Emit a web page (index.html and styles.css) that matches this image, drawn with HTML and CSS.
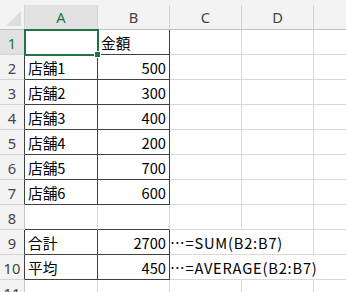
FILE: index.html
```html
<!DOCTYPE html>
<html lang="ja">
<head>
<meta charset="utf-8">
<link rel="stylesheet" href="styles.css">
</head>
<body>
<div class="sheet">
  <div class="topstrip"></div>
  <div class="corner"><span class="tri"></span></div>
  <div class="colh sel">A</div>
  <div class="colh">B</div>
  <div class="colh">C</div>
  <div class="colh">D</div>
  <div class="colh last"></div>

  <div class="rowh sel">1</div>
  <div class="cell a1 bt br"></div>
  <div class="cell bt br">金額</div>
  <div class="cell"></div>
  <div class="cell"></div>
  <div class="cell last"></div>

  <div class="rowh bd">2</div>
  <div class="cell bt br">店舗1</div>
  <div class="cell num bt br">500</div>
  <div class="cell"></div>
  <div class="cell"></div>
  <div class="cell last"></div>

  <div class="rowh bd">3</div>
  <div class="cell bt br">店舗2</div>
  <div class="cell num bt br">300</div>
  <div class="cell"></div>
  <div class="cell"></div>
  <div class="cell last"></div>

  <div class="rowh bd">4</div>
  <div class="cell bt br">店舗3</div>
  <div class="cell num bt br">400</div>
  <div class="cell"></div>
  <div class="cell"></div>
  <div class="cell last"></div>

  <div class="rowh bd">5</div>
  <div class="cell bt br">店舗4</div>
  <div class="cell num bt br">200</div>
  <div class="cell"></div>
  <div class="cell"></div>
  <div class="cell last"></div>

  <div class="rowh bd">6</div>
  <div class="cell bt br">店舗5</div>
  <div class="cell num bt br">700</div>
  <div class="cell"></div>
  <div class="cell"></div>
  <div class="cell last"></div>

  <div class="rowh bd">7</div>
  <div class="cell bt br">店舗6</div>
  <div class="cell num bt br">600</div>
  <div class="cell"></div>
  <div class="cell"></div>
  <div class="cell last"></div>

  <div class="rowh">8</div>
  <div class="cell bt"></div>
  <div class="cell bt"></div>
  <div class="cell"></div>
  <div class="cell"></div>
  <div class="cell last"></div>

  <div class="rowh bd">9</div>
  <div class="cell bt br">合計</div>
  <div class="cell num bt br">2700</div>
  <div class="cell over nr">…=SUM(B2:B7)</div>
  <div class="cell"></div>
  <div class="cell last"></div>

  <div class="rowh bd">10</div>
  <div class="cell bt br">平均</div>
  <div class="cell num bt br">450</div>
  <div class="cell over nr">…=AVERAGE(B2:B7)</div>
  <div class="cell nr"></div>
  <div class="cell last"></div>

  <div class="rowh">11</div>
  <div class="cell"></div>
  <div class="cell"></div>
  <div class="cell"></div>
  <div class="cell"></div>
  <div class="cell last"></div>
</div>
</body>
</html>
```

FILE: styles.css
```css
html, body {
  margin: 0;
  padding: 0;
  background: #ffffff;
}
body {
  width: 346px;
  height: 292px;
  overflow: hidden;
  font-family: "Noto Sans CJK JP", "Noto Sans", sans-serif;
  font-size: 14.67px;
  color: #000;
}
.sheet {
  display: grid;
  grid-template-columns: 25px 73px 72px 72px 72px 32px;
  grid-template-rows: 5px 25px repeat(10, 25px) 25px;
}
.topstrip {
  grid-column: 1 / -1;
  background: #f3f3f3;
}
.corner {
  position: relative;
  background: #f3f3f3;
  border-right: 1px solid #d4d4d4;
  border-bottom: 1px solid #bfbfbf;
}
.tri {
  position: absolute;
  right: 3px;
  bottom: 3px;
  width: 0;
  height: 0;
  border-left: 15px solid transparent;
  border-bottom: 15px solid #dcdcdc;
}
.colh {
  background: #f3f3f3;
  border-right: 1px solid #d4d4d4;
  border-bottom: 1px solid #bfbfbf;
  color: #444;
  display: flex;
  align-items: center;
  justify-content: center;
  font-family: "Noto Sans", sans-serif;
  font-size: 14.67px;
}
.colh.last { border-right: none; }
.colh.sel {
  background: #e1e1e1;
  color: #217346;
}
.rowh {
  background: #f3f3f3;
  border-right: 1px solid #c6c6c6;
  border-bottom: 1px solid #d4d4d4;
  color: #444;
  display: flex;
  align-items: center;
  justify-content: center;
  font-family: "Noto Sans", sans-serif;
  font-size: 14.67px;
  padding-top: 1px;
}
.rowh.bd { border-right-color: #404040; }
.rowh.sel {
  background: #e1e1e1;
  color: #217346;
  border-right: 1px solid #217346;
}
.cell {
  border-right: 1px solid #d9d9d9;
  border-bottom: 1px solid #d9d9d9;
  display: flex;
  align-items: center;
  padding: 1px 3px 0 3px;
  white-space: nowrap;
  min-width: 0;
}
.cell.last { border-right: none; }
.cell.num { justify-content: flex-end; padding-right: 3px; }
.cell.bt { border-bottom-color: #404040; }
.cell.br { border-right-color: #404040; }
.cell.nr { border-right-color: transparent; }
.cell.over {
  overflow: visible;
  padding-left: 0;
  letter-spacing: 0.8px;
  position: relative;
  z-index: 1;
}
.cell.a1 {
  position: relative;
  outline: 2px solid #217346;
  outline-offset: -1px;
  z-index: 2;
}
.cell.a1::after {
  content: "";
  position: absolute;
  right: -4px;
  bottom: -4px;
  width: 5px;
  height: 5px;
  background: #217346;
  border: 1px solid #fff;
}
```
